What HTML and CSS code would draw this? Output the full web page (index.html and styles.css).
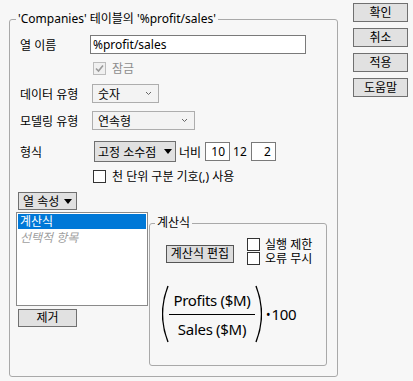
FILE: index.html
```html
<!DOCTYPE html>
<html lang="ko">
<head>
    <meta charset="UTF-8">
    <meta name="viewport" content="width=device-width, initial-scale=1.0">
    <title>열 정보</title>
    <link rel="stylesheet" href="styles.css">
</head>
<body>
    <div class="dialog">
        <fieldset class="group main-group">
            <legend>'Companies' 테이블의 '%profit/sales'</legend>

            <div class="row row-name">
                <span class="label">열 이름</span>
                <div class="text-input name-input">%profit/sales</div>
            </div>

            <div class="row row-lock">
                <span class="label"></span>
                <span class="check disabled">
                    <svg width="11" height="11" viewBox="0 0 11 11"><polyline points="2,5.5 4.5,8 9,2.5" fill="none" stroke="#9a9a9a" stroke-width="1.6"/></svg>
                </span>
                <span class="check-label muted">잠금</span>
            </div>

            <div class="row row-type">
                <span class="label">데이터 유형</span>
                <div class="combo combo-data">
                    <span>숫자</span>
                    <svg class="chevron" width="7" height="5" viewBox="0 0 7 5"><polyline points="1,1 3.5,3.5 6,1" fill="none" stroke="#666" stroke-width="1"/></svg>
                </div>
            </div>

            <div class="row row-model">
                <span class="label">모델링 유형</span>
                <div class="combo combo-model">
                    <span>연속형</span>
                    <svg class="chevron" width="7" height="5" viewBox="0 0 7 5"><polyline points="1,1 3.5,3.5 6,1" fill="none" stroke="#666" stroke-width="1"/></svg>
                </div>
            </div>

            <div class="row row-format">
                <span class="label">형식</span>
                <div class="drop drop-format">
                    <span>고정 소수점</span>
                    <svg class="tri" width="8" height="5" viewBox="0 0 8 5"><polygon points="0,0 8,0 4,5" fill="#000"/></svg>
                </div>
                <span class="format-text">너비</span>
                <div class="text-input num-input">10</div>
                <span class="format-text">12</span>
                <div class="text-input num-input">2</div>
            </div>

            <div class="row row-thousand">
                <span class="label"></span>
                <span class="check"></span>
                <span class="check-label">천 단위 구분 기호(,) 사용</span>
            </div>

            <div class="lower">
                <div class="prop-col">
                    <div class="drop drop-prop">
                        <span>열 속성</span>
                        <svg class="tri" width="8" height="5" viewBox="0 0 8 5"><polygon points="0,0 8,0 4,5" fill="#000"/></svg>
                    </div>
                    <div class="listbox">
                        <div class="list-item selected">계산식</div>
                        <div class="list-item optional">선택적 항목</div>
                    </div>
                    <div class="btn btn-remove">제거</div>
                </div>

                <fieldset class="group formula-group">
                    <legend>계산식</legend>
                    <div class="formula-top">
                        <div class="btn btn-edit">계산식 편집</div>
                        <div class="formula-opts">
                            <div class="opt"><span class="check"></span><span class="check-label">실행 제한</span></div>
                            <div class="opt"><span class="check"></span><span class="check-label">오류 무시</span></div>
                        </div>
                    </div>
                    <div class="formula">
                        <svg class="paren" width="7" height="58" viewBox="0 0 7 58"><path d="M6,1 Q0.5,15 0.5,29 Q0.5,43 6,57" fill="none" stroke="#000" stroke-width="1.4"/></svg>
                        <div class="fraction">
                            <div class="numer">Profits ($M)</div>
                            <div class="frac-line"></div>
                            <div class="denom">Sales ($M)</div>
                        </div>
                        <svg class="paren" width="7" height="58" viewBox="0 0 7 58"><path d="M1,1 Q6.5,15 6.5,29 Q6.5,43 1,57" fill="none" stroke="#000" stroke-width="1.4"/></svg>
                        <span class="times">•</span>
                        <span class="factor">100</span>
                    </div>
                </fieldset>
            </div>
        </fieldset>

        <div class="side">
            <div class="btn side-btn">확인</div>
            <div class="btn side-btn">취소</div>
            <div class="btn side-btn">적용</div>
            <div class="btn side-btn">도움말</div>
        </div>
    </div>
</body>
</html>
```

FILE: styles.css
```css
body {
    margin: 0;
    background-color: #f7f7f7;
    font-family: "Noto Sans", "Noto Sans CJK KR", sans-serif;
    font-size: 12px;
    color: #000;
}
.dialog {
    display: flex;
    align-items: flex-start;
}
.group {
    border: 1px solid #a9a9a9;
    border-radius: 3px;
    margin: 0;
    box-sizing: border-box;
}
.group legend {
    line-height: 14px;
    height: 14px;
    padding: 0 2px;
}
.main-group {
    margin: 12px 0 0 9px;
    width: 326px;
    height: 365px;
    padding: 9px 10px 0 10px;
}
.main-group > legend {
    margin-left: -4px;
}
.row {
    display: flex;
    align-items: center;
}
.label {
    width: 72px;
    flex-shrink: 0;
}
.text-input {
    box-sizing: border-box;
    background-color: #fff;
    border: 1px solid #7a7a7a;
    height: 19px;
    line-height: 17px;
    padding: 0 2px;
}
.name-input {
    width: 216px;
    margin-left: -2px;
}
.row-lock {
    margin-top: 8px;
    height: 13px;
}
.check {
    box-sizing: border-box;
    width: 13px;
    height: 13px;
    background-color: #fff;
    border: 1px solid #333;
    margin-left: 1px;
    display: flex;
    align-items: center;
    justify-content: center;
    flex-shrink: 0;
}
.check.disabled {
    background-color: #f0f0f0;
    border-color: #bcbcbc;
}
.check-label {
    margin-left: 6px;
    white-space: nowrap;
    line-height: 13px;
}
.muted {
    color: #8d8d8d;
}
.row-type {
    margin-top: 9px;
}
.row-model {
    margin-top: 8px;
}
.combo {
    box-sizing: border-box;
    height: 19px;
    border: 1px solid #adadad;
    background-color: #f3f3f3;
    display: flex;
    align-items: center;
    justify-content: space-between;
    padding: 0 6px 0 5px;
}
.combo-data {
    width: 67px;
}
.combo-model {
    width: 103px;
}
.row-format {
    margin-top: 11px;
}
.drop {
    box-sizing: border-box;
    border: 1px solid #707070;
    background-color: #e1e1e1;
    display: flex;
    align-items: center;
    justify-content: space-between;
    padding: 0 3px 0 3px;
}
.drop-format {
    width: 82px;
    height: 21px;
    margin-left: 2px;
}
.format-text {
    margin: 0 4px 0 3px;
}
.num-input {
    width: 25px;
    text-align: right;
    padding-right: 4px;
}
.row-thousand {
    margin-top: 8px;
    height: 13px;
}
.lower {
    display: flex;
    align-items: flex-start;
    margin-top: 9px;
    margin-left: -4px;
}
.prop-col {
    display: flex;
    flex-direction: column;
    width: 132px;
}
.drop-prop {
    width: 59px;
    height: 18px;
    margin-left: 2px;
    padding-left: 4px;
}
.drop-prop .tri {
    margin-right: 1px;
}
.listbox {
    box-sizing: border-box;
    margin-top: 2px;
    height: 94px;
    background-color: #fff;
    border: 1px solid #8a8a8a;
    padding: 1px;
}
.list-item {
    height: 15px;
    line-height: 15px;
    padding-left: 2px;
}
.list-item.selected {
    background-color: #0078d7;
    color: #fff;
}
.list-item.optional {
    color: #a0a0a0;
    font-style: italic;
    margin-top: 1px;
}
.btn {
    box-sizing: border-box;
    background-color: #e1e1e1;
    border: 1px solid #707070;
    text-align: center;
    white-space: nowrap;
}
.btn-remove {
    width: 59px;
    height: 18px;
    line-height: 16px;
    margin: 3px 0 0 2px;
}
.formula-group {
    width: 178px;
    height: 150px;
    margin: 24px 0 0 1px;
    padding: 0 0 0 12px;
}
.formula-group > legend {
    margin-left: -7px;
}
.formula-top {
    display: flex;
    align-items: flex-start;
}
.btn-edit {
    width: 68px;
    height: 18px;
    line-height: 16px;
    margin: 15px 0 0 4px;
    background-color: #dcdcdc;
    border-color: #555;
}
.formula-opts {
    margin: 8px 0 0 12px;
}
.opt {
    display: flex;
    align-items: center;
    height: 13px;
    margin-bottom: 1px;
}
.opt .check-label {
    margin-left: 5px;
}
.formula {
    display: flex;
    align-items: center;
    margin-top: 19px;
    font-size: 15px;
}
.fraction {
    display: flex;
    flex-direction: column;
    align-items: center;
    width: 86px;
}
.numer {
    line-height: 20px;
    padding-bottom: 4px;
    letter-spacing: -0.3px;
}
.frac-line {
    align-self: stretch;
    height: 1px;
    background-color: #000;
}
.denom {
    line-height: 20px;
    padding-top: 4px;
    letter-spacing: -0.3px;
}
.times {
    font-size: 12px;
    margin: 0 1px 0 4px;
}
.factor {
    letter-spacing: -0.3px;
}
.side {
    display: flex;
    flex-direction: column;
    gap: 6px;
    margin: 3px 0 0 15px;
}
.side-btn {
    width: 55px;
    height: 19px;
    line-height: 17px;
}
```
